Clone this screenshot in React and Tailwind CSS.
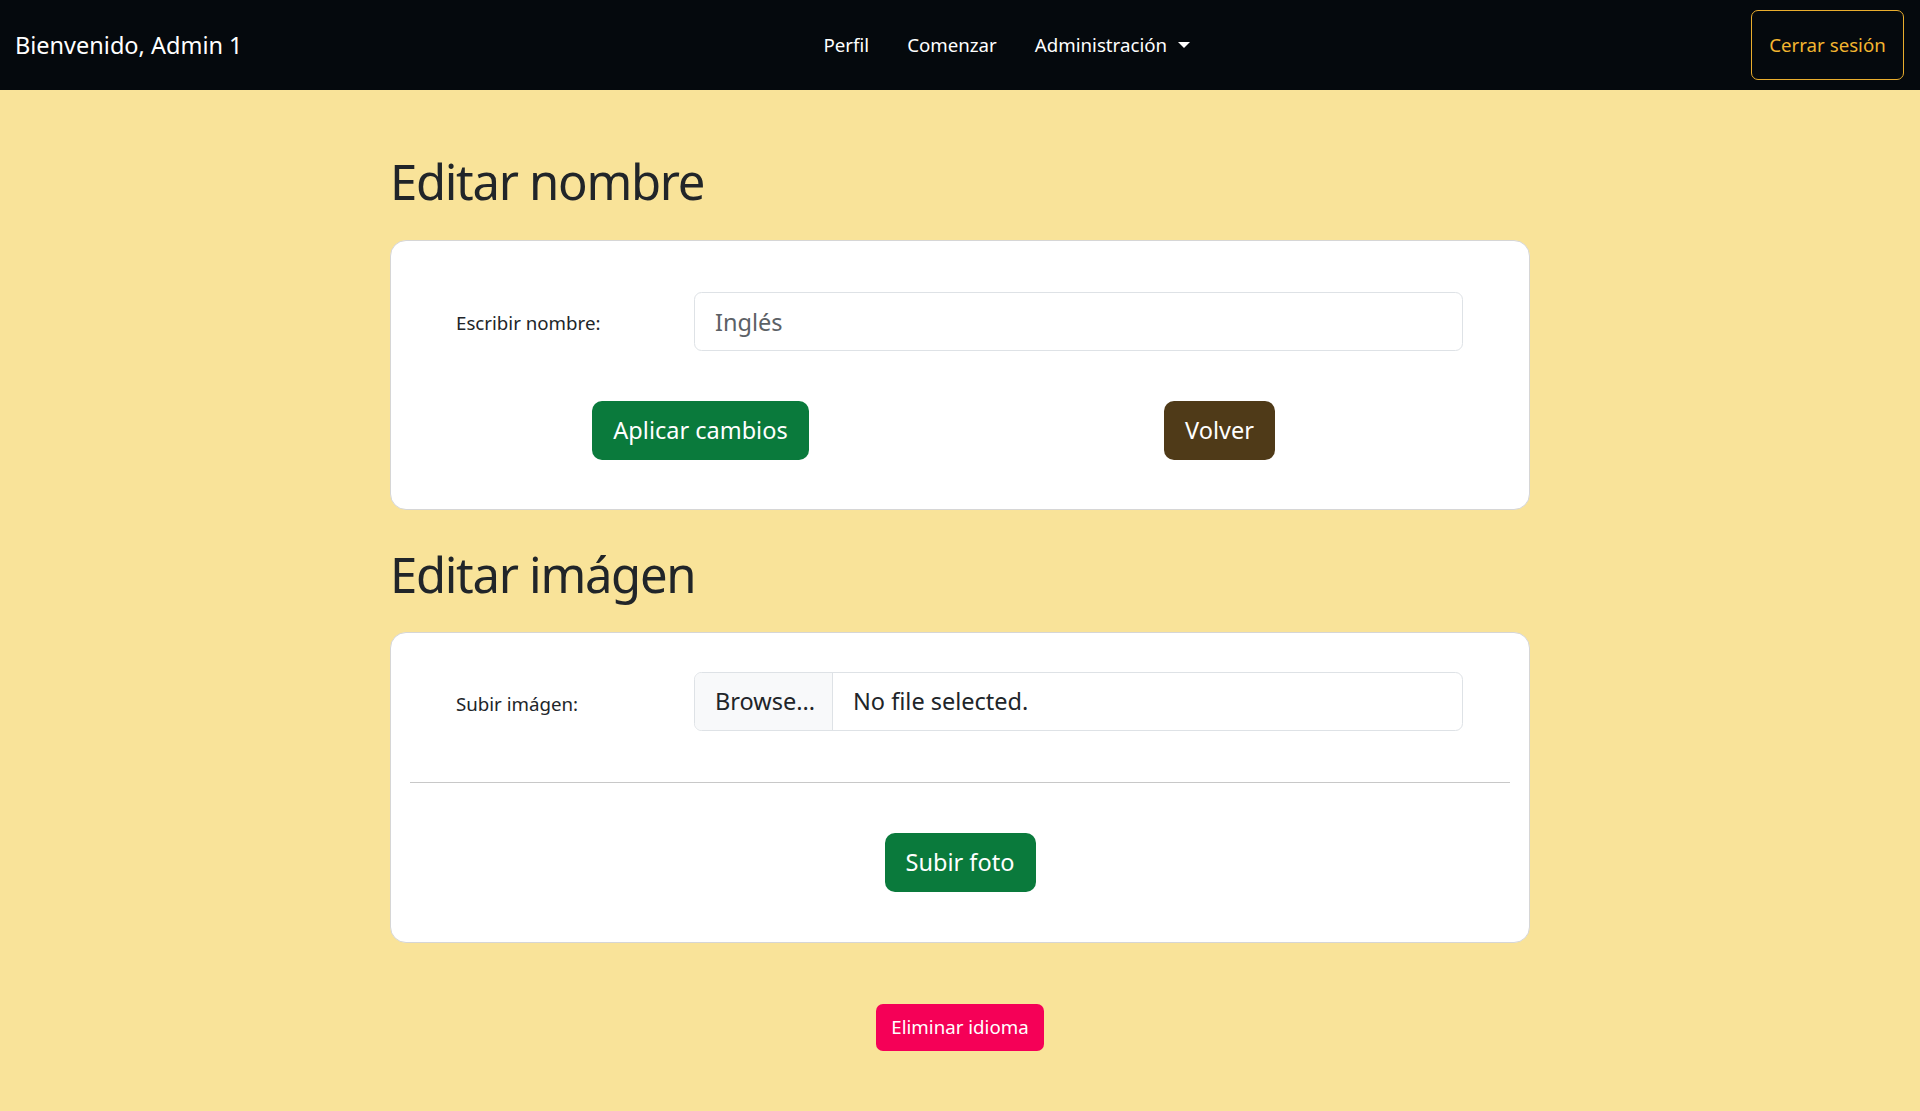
import React from "react";

const font = { fontFamily: '"Noto Sans", "Open Sans", sans-serif' };

function NavBar() {
  return (
    <nav className="h-[90px] bg-[#05090d] flex items-center pl-[15px] pr-[16px]">
      <span className="text-white text-[23.5px] leading-[30px] whitespace-nowrap">Bienvenido, Admin 1</span>

      <ul className="mx-auto pl-[20px] flex items-center text-white text-[18.7px] leading-[30px]">
        <li className="px-[19px]">Perfil</li>
        <li className="px-[19px]">Comenzar</li>
        <li className="px-[19px] flex items-center">
          Administración
          {/* dropdown caret */}
          <span className="ml-[11px] inline-block w-0 h-0 border-t-[6px] border-t-white border-x-[6px] border-x-transparent" />
        </li>
      </ul>

      <button className="w-[153px] h-[70px] rounded-[7px] border border-[#e9ad2d] text-[#f3b530] text-[18.7px] leading-[30px] whitespace-nowrap">
        Cerrar sesión
      </button>
    </nav>
  );
}

function Card({ children, className = "" }) {
  return (
    <div className={"bg-white border border-[#d6d6d6] rounded-[16px] " + className}>{children}</div>
  );
}

export default function App() {
  return (
    <div className="min-h-screen bg-[#f9e399] text-[#212529]" style={font}>
      <NavBar />

      <main className="w-[1140px] mx-auto pb-[60px]">
        <h1 className="mt-[61px] mb-[29px] text-[49px] tracking-[-1.3px] leading-[60px]">Editar nombre</h1>

        {/* name form */}
        <Card className="pt-[51px] pb-[49px]">
          <div className="flex items-center pl-[65px]">
            <label className="w-[238px] pt-[3px] text-[18.7px] leading-[30px]">Escribir nombre:</label>
            <input
              type="text"
              placeholder="Inglés"
              className="w-[769px] h-[59px] px-[20px] text-[23.5px] rounded-[7.5px] border border-[#dee2e6] outline-none placeholder:text-[#5c6166]"
            />
          </div>
          <div className="flex items-center mt-[50px] pl-[201px]">
            <button className="w-[217px] h-[59px] rounded-[10px] bg-[#0a7a3c] text-white text-[23.5px]">Aplicar cambios</button>
            <button className="ml-[355px] w-[111px] h-[59px] rounded-[10px] bg-[#4f3a18] text-white text-[23.5px]">Volver</button>
          </div>
        </Card>

        <h1 className="mt-[34px] mb-[28px] text-[49px] tracking-[-1.3px] leading-[60px]">Editar imágen</h1>

        {/* image upload */}
        <Card className="pt-[39px] pb-[50px] px-[19px]">
          <div className="flex items-center pl-[46px]">
            <label className="w-[238px] pt-[4px] text-[18.7px] leading-[30px]">Subir imágen:</label>
            <div className="w-[769px] h-[59px] flex rounded-[7.5px] border border-[#dee2e6] overflow-hidden text-[23.5px]">
              <div className="w-[138px] flex items-center px-[20px] bg-[#f8f9fa] border-r border-[#dee2e6] whitespace-nowrap">Browse...</div>
              <div className="flex items-center px-[20px] whitespace-nowrap">No file selected.</div>
            </div>
          </div>
          <hr className="mt-[51px] border-t border-[#c8c8c8]" />
          <div className="flex justify-center mt-[50px]">
            <button className="w-[151px] h-[59px] rounded-[10px] bg-[#0a7a3c] text-white text-[23.5px]">Subir foto</button>
          </div>
        </Card>

        <div className="flex justify-center mt-[61px]">
          <button className="w-[168px] h-[47px] rounded-[7px] bg-[#f50057] text-white text-[18.7px]">Eliminar idioma</button>
        </div>
      </main>
    </div>
  );
}
